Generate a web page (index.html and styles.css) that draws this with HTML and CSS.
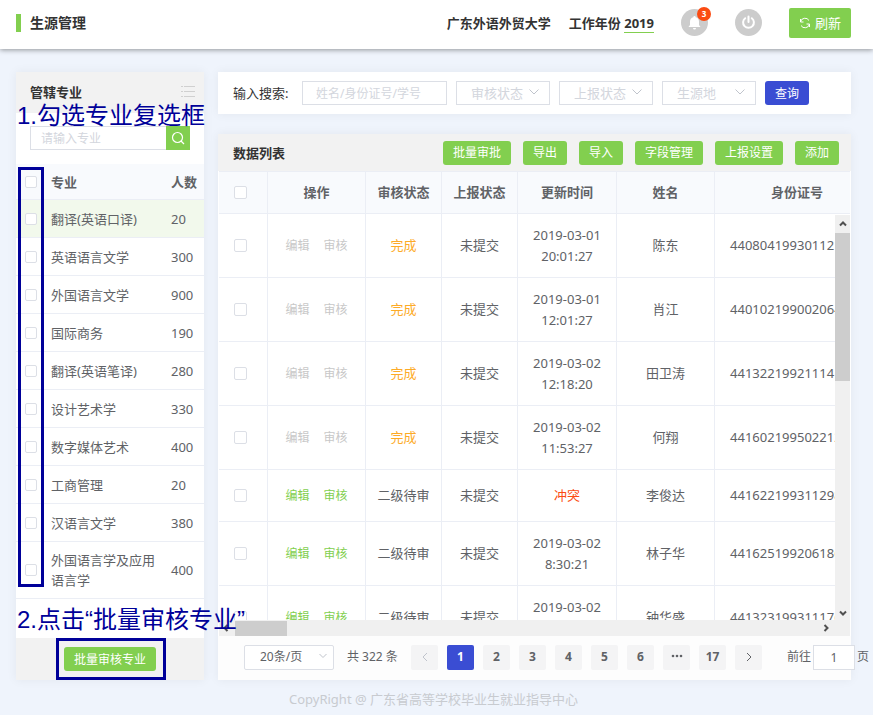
FILE: index.html
```html
<!DOCTYPE html>
<html lang="zh-CN">
<head>
	<meta charset="UTF-8">
	<title>生源管理</title>
	<link rel="stylesheet" href="styles.css">
</head>
<body>
	<header class="header">
		<h1 class="title">生源管理</h1>
		<div class="tools">
			<span class="school">广东外语外贸大学</span>
			<span class="year">工作年份 <a href="#">2019</a></span>
			<button class="round bell" aria-label="消息">
				<svg width="27" height="27" viewBox="0 0 27 27"><path d="M13.5 7a1.2 1.2 0 0 1 1.2 1.2c2 .5 3.300 2.200 3.300 4.300v3.500l1.500 2H7.500l1.500-2v-3.500c0-2.100 1.300-3.800 3.300-4.300A1.200 1.200 0 0 1 13.500 7zM12 19h3a1.500 1.500 0 0 1-3 0z" fill="#fff"/></svg>
				<span class="badge">3</span>
			</button>
			<button class="round" aria-label="退出">
				<svg width="27" height="27" viewBox="0 0 27 27" fill="none" stroke="#fff" stroke-width="2" stroke-linecap="round"><path d="M10.200 9.200a5.400 5.400 0 1 0 6.600 0M13.500 7.500v5.500"/></svg>
			</button>
			<button class="refresh">
				<svg width="12" height="12" viewBox="0 0 12 12" fill="none" stroke="#fff"><path d="M1.500 5a4.600 4.600 0 0 1 8.500-1.500M10.500 7A4.600 4.600 0 0 1 2 8.500M1.500 2v3h3M10.500 10V7h-3"/></svg>刷新
			</button>
		</div>
	</header>

	<div class="content">
		<!-- 左侧专业 -->
		<aside class="card side">
			<div class="side-head">
				<h2>管辖专业</h2>
				<svg width="14" height="12" viewBox="0 0 14 12" stroke="#d0d0d0" stroke-width="1"><path d="M0 .5h2M3 .5H14M0 5.500h2M3 5.500H14M0 10.500h2M3 10.500H14"/></svg>
			</div>
			<form class="side-search">
				<input type="text" placeholder="请输入专业" aria-label="请输入专业">
				<button type="button" aria-label="搜索">
					<svg width="14" height="14" viewBox="0 0 14 14" fill="none" stroke="#fff" stroke-width="1.200"><circle cx="6.500" cy="6.500" r="5"/><path d="M10 10l3 3"/></svg>
				</button>
			</form>
			<table class="major">
				<colgroup><col class="m-check"><col><col class="m-num"></colgroup>
				<thead>
					<tr><th><input type="checkbox" aria-label="全选"></th><th>专业</th><th>人数</th></tr>
				</thead>
				<tbody>
					<tr class="on"><td><input type="checkbox" aria-label="翻译(英语口译)"></td><td>翻译(英语口译)</td><td>20</td></tr>
					<tr><td><input type="checkbox" aria-label="英语语言文学"></td><td>英语语言文学</td><td>300</td></tr>
					<tr><td><input type="checkbox" aria-label="外国语言文学"></td><td>外国语言文学</td><td>900</td></tr>
					<tr><td><input type="checkbox" aria-label="国际商务"></td><td>国际商务</td><td>190</td></tr>
					<tr><td><input type="checkbox" aria-label="翻译(英语笔译)"></td><td>翻译(英语笔译)</td><td>280</td></tr>
					<tr><td><input type="checkbox" aria-label="设计艺术学"></td><td>设计艺术学</td><td>330</td></tr>
					<tr><td><input type="checkbox" aria-label="数字媒体艺术"></td><td>数字媒体艺术</td><td>400</td></tr>
					<tr><td><input type="checkbox" aria-label="工商管理"></td><td>工商管理</td><td>20</td></tr>
					<tr><td><input type="checkbox" aria-label="汉语言文学"></td><td>汉语言文学</td><td>380</td></tr>
					<tr class="two"><td><input type="checkbox" aria-label="外国语言学及应用语言学"></td><td>外国语言学及应用语言学</td><td>400</td></tr>
				</tbody>
			</table>
			<div class="side-foot">
				<button class="btn">批量审核专业</button>
				<span class="mark mark-btn"></span>
			</div>
			<span class="mark mark-check"></span>
			<p class="tip tip-one">1.勾选专业复选框</p>
			<p class="tip tip-two">2.点击“批量审核专业”</p>
		</aside>

		<main class="main">
			<form class="card search">
				<label for="key">输入搜索:</label>
				<input type="text" id="key" placeholder="姓名/身份证号/学号">
				<div class="select">
					<select aria-label="审核状态"><option>审核状态</option></select>
					<svg width="10" height="6" viewBox="0 0 10 6"><path d="M.5.5L5 5 9.500.5"/></svg>
				</div>
				<div class="select">
					<select aria-label="上报状态"><option>上报状态</option></select>
					<svg width="10" height="6" viewBox="0 0 10 6"><path d="M.5.5L5 5 9.500.5"/></svg>
				</div>
				<div class="select">
					<select aria-label="生源地"><option>生源地</option></select>
					<svg width="10" height="6" viewBox="0 0 10 6"><path d="M.5.5L5 5 9.500.5"/></svg>
				</div>
				<button type="button" class="btn blue">查询</button>
			</form>

			<section class="card list">
				<div class="list-head">
					<h2>数据列表</h2>
					<button class="btn">批量审批</button>
					<button class="btn">导出</button>
					<button class="btn">导入</button>
					<button class="btn">字段管理</button>
					<button class="btn">上报设置</button>
					<button class="btn">添加</button>
				</div>
				<div class="list-body">
					<div class="rows">
						<table class="data">
							<colgroup><col class="c-check"><col class="c-wide"><col class="c-state"><col class="c-state"><col class="c-time"><col class="c-wide"><col class="c-id"></colgroup>
							<thead>
								<tr><th><input type="checkbox" aria-label="全选"></th><th>操作</th><th>审核状态</th><th>上报状态</th><th>更新时间</th><th>姓名</th><th>身份证号</th></tr>
							</thead>
							<tbody>
								<tr class="done"><td><input type="checkbox" aria-label="陈东"></td><td><a href="#">编辑</a><a href="#">审核</a></td><td>完成</td><td>未提交</td><td>2019-03-01<br>20:01:27</td><td>陈东</td><td>440804199301121532</td></tr>
								<tr class="done"><td><input type="checkbox" aria-label="肖江"></td><td><a href="#">编辑</a><a href="#">审核</a></td><td>完成</td><td>未提交</td><td>2019-03-01<br>12:01:27</td><td>肖江</td><td>440102199002064415</td></tr>
								<tr class="done"><td><input type="checkbox" aria-label="田卫涛"></td><td><a href="#">编辑</a><a href="#">审核</a></td><td>完成</td><td>未提交</td><td>2019-03-02<br>12:18:20</td><td>田卫涛</td><td>441322199211141013</td></tr>
								<tr class="done"><td><input type="checkbox" aria-label="何翔"></td><td><a href="#">编辑</a><a href="#">审核</a></td><td>完成</td><td>未提交</td><td>2019-03-02<br>11:53:27</td><td>何翔</td><td>441602199502212016</td></tr>
								<tr class="short"><td><input type="checkbox" aria-label="李俊达"></td><td><a href="#">编辑</a><a href="#">审核</a></td><td>二级待审</td><td>未提交</td><td class="clash">冲突</td><td>李俊达</td><td>441622199311298017</td></tr>
								<tr><td><input type="checkbox" aria-label="林子华"></td><td><a href="#">编辑</a><a href="#">审核</a></td><td>二级待审</td><td>未提交</td><td>2019-03-02<br>8:30:21</td><td>林子华</td><td>441625199206186014</td></tr>
								<tr><td><input type="checkbox" aria-label="钟华盛"></td><td><a href="#">编辑</a><a href="#">审核</a></td><td>二级待审</td><td>未提交</td><td>2019-03-02<br>8:30:21</td><td>钟华盛</td><td>441323199311176011</td></tr>
							</tbody>
						</table>
					</div>
					<div class="bar-y">
						<svg width="8" height="6" viewBox="0 0 8 6"><path d="M1 4.500L4 1.500l3 3"/></svg>
						<span class="thumb"></span>
						<svg width="8" height="6" viewBox="0 0 8 6"><path d="M1 1.500l3 3 3-3"/></svg>
					</div>
					<div class="bar-x">
						<svg width="6" height="8" viewBox="0 0 6 8"><path d="M4.500 1l-3 3 3 3"/></svg>
						<span class="thumb"></span>
						<svg width="6" height="8" viewBox="0 0 6 8"><path d="M1.500 1l3 3-3 3"/></svg>
					</div>
				</div>
				<div class="pages">
					<div class="select size">
						<select aria-label="每页条数"><option>20条/页</option></select>
						<svg width="10" height="6" viewBox="0 0 10 6"><path d="M1.500 1L5 4.500 8.500 1"/></svg>
					</div>
					<span class="total">共 322 条</span>
					<button aria-label="上一页" disabled><svg width="6" height="10" viewBox="0 0 6 10"><path d="M5 1L1 5l4 4"/></svg></button>
					<button class="now">1</button>
					<button>2</button>
					<button>3</button>
					<button>4</button>
					<button>5</button>
					<button>6</button>
					<button aria-label="更多"><svg class="dots" width="12" height="10" viewBox="0 0 12 10"><circle cx="2" cy="4" r="1.300"/><circle cx="6" cy="4" r="1.300"/><circle cx="10" cy="4" r="1.300"/></svg></button>
					<button>17</button>
					<button aria-label="下一页"><svg width="6" height="10" viewBox="0 0 6 10"><path d="M1 1l4 4-4 4"/></svg></button>
					<label class="jump">前往<input type="text" value="1">页</label>
				</div>
			</section>
		</main>
	</div>
	<footer class="footer">CopyRight @ 广东省高等学校毕业生就业指导中心</footer>
</body>
</html>
```

FILE: styles.css
```css
*{
	box-sizing: border-box;
}
body{
	margin: 0;
	min-height: 100vh;
	display: flex;
	flex-direction: column;
	background: #eff4fc;
	color: #606266;
	font: 13px/20px "Noto Sans", "Noto Sans CJK SC", sans-serif;
}
h1, h2, p{
	margin: 0;
}
h2{
	font-size: 13px;
	color: #333;
}
button, input, select{
	font: inherit;
	color: inherit;
	margin: 0;
}
button{
	border: 0;
	padding: 0;
	cursor: pointer;
}
a{
	color: inherit;
	text-decoration: none;
}
svg{
	display: block;
	flex: none;
}
table{
	border-collapse: separate;
	border-spacing: 0;
	table-layout: fixed;
}
th, td{
	padding: 0;
	border-bottom: 1px solid #ebeef5;
}
th{
	background: #f8fafd;
}
input[type=text]{
	border: 1px solid #dcdfe6;
	background: #fff;
	height: 24px;
	outline: 0;
}
input::placeholder{
	color: #d3d6dd;
	opacity: 1;
}
input[type=checkbox]{
	appearance: none;
	display: block;
	width: 13px;
	height: 13px;
	margin: 0 auto;
	border: 1px solid #dcdfe6;
	border-radius: 2px;
	background: #fff;
}

/* 顶部 */
.header{
	height: 49px;
	padding: 0 22px 4px 16px;
	display: flex;
	align-items: center;
	justify-content: space-between;
	background: #fff;
	box-shadow: 0 1px 5px rgba(0,0,0,.4);
	color: #333;
}
.title{
	border-left: 5px solid #82cf4f;
	padding-left: 9px;
	font-size: 14px;
	line-height: 18px;
}
.tools{
	display: flex;
	align-items: center;
	font-weight: bold;
}
.year{
	margin-left: 18px;
}
.year a{
	display: inline-block;
	line-height: 17px;
	border-bottom: 1px solid #82cf4f;
}
.round{
	position: relative;
	width: 27px;
	height: 27px;
	margin-left: 27px;
	border-radius: 50%;
	background: #ccc;
}
.badge{
	position: absolute;
	top: -2px;
	right: -3px;
	width: 14px;
	height: 14px;
	border-radius: 50%;
	background: #fb4b12;
	color: #fff;
	font-size: 8px;
	line-height: 14px;
}
.refresh{
	display: flex;
	align-items: center;
	justify-content: center;
	gap: 4px;
	width: 62px;
	height: 30px;
	margin-left: 27px;
	border-radius: 2px;
	background: #82cf4f;
	color: #fff;
	font-weight: normal;
}

.content{
	flex: 1;
	display: grid;
	grid-template-columns: 188px minmax(0, 1fr);
	gap: 14px;
	padding: 23px 22px 0 16px;
}
.card{
	background: #fff;
	box-shadow: 0 0 10px rgba(0,0,0,.06);
}
.btn{
	height: 24px;
	padding: 1px 10px 0;
	border-radius: 3px;
	background: #82cf4f;
	color: #fff;
	font-size: 12px;
	white-space: nowrap;
}
.blue{
	background: #3a4dd3;
}

/* 左侧 */
.side{
	position: relative;
	display: flex;
	flex-direction: column;
}
.side-head{
	display: flex;
	align-items: center;
	justify-content: space-between;
	height: 41px;
	padding: 0 9px 2px 14px;
	background: #f2f2f2;
}
.side-search{
	display: flex;
	padding: 13px 14px 14px;
}
.side-search input{
	flex: 1;
	min-width: 0;
	padding: 0 10px;
	border-right: 0;
	font-size: 12px;
}
.side-search button{
	width: 24px;
	height: 24px;
	padding: 0 5px;
	background: #82cf4f;
}
.major{
	width: 100%;
	text-align: left;
}
.major tr{
	height: 38px;
}
.major thead tr{
	height: 36px;
}
.major .two{
	height: 57px;
}
.m-check{
	width: 35px;
}
.m-num{
	width: 49px;
}
.major td:last-child, .major th:last-child{
	padding-left: 16px;
	white-space: nowrap;
}
.major input{
	margin-left: 9px;
	width: 12px;
	height: 12px;
}
.on{
	background: #f2f9ec;
}
.side-foot{
	position: relative;
	margin-top: auto;
	height: 42px;
	display: flex;
	align-items: center;
	justify-content: center;
	background: #f2f2f2;
}

/* 操作提示 */
.mark{
	position: absolute;
	border: 3px solid #000099;
	pointer-events: none;
}
.mark-check{
	left: 2px;
	top: 95px;
	width: 26px;
	height: 420px;
}
.mark-btn{
	inset: 0 38px 0 40px;
}
.tip{
	position: absolute;
	left: 1px;
	z-index: 2;
	color: #000099;
	font: 24px/30px "Liberation Sans", "Noto Sans CJK SC", sans-serif;
	white-space: nowrap;
}
.tip-one{
	top: 29px;
}
.tip-two{
	top: 533px;
}

/* 右侧 */
.main{
	display: flex;
	flex-direction: column;
	gap: 20px;
}
.search{
	display: flex;
	align-items: center;
	gap: 9px;
	height: 42px;
	padding: 0 15px;
}
.search label{
	width: 60px;
	color: #333;
	white-space: nowrap;
}
.search input{
	width: 145px;
	padding: 0 13px;
	font-size: 12px;
}
.select{
	position: relative;
	width: 94px;
}
.select select{
	appearance: none;
	display: block;
	width: 100%;
	height: 24px;
	padding: 0 14px;
	border: 1px solid #dcdfe6;
	border-radius: 0;
	background: #fff;
	color: #d3d6dd;
}
.select svg{
	position: absolute;
	right: 11px;
	top: 8px;
	fill: none;
	stroke: #c0c4cc;
	pointer-events: none;
}
.list{
	flex: 1;
	display: flex;
	flex-direction: column;
}
.list-head{
	display: flex;
	align-items: center;
	gap: 12px;
	height: 37px;
	padding: 0 12px 0 15px;
	background: #f2f2f2;
}
.list-head h2{
	margin-right: auto;
}
.list-body{
	position: relative;
	flex: 1 0 465px;
	margin: 0 1px;
	border-top: 1px solid #ebeef5;
	overflow: hidden;
}
.rows{
	position: absolute;
	inset: 0 0 16px 0;
	overflow: hidden;
}
.data{
	width: 661px;
	text-align: center;
	line-height: 21px;
}
.data tr{
	height: 64px;
}
.data thead tr{
	height: 42px;
}
.data .short{
	height: 52px;
}
.data th, .data td{
	border-right: 1px solid #ebeef5;
}
.c-check{
	width: 49px;
}
.c-wide{
	width: 98px;
}
.c-state{
	width: 76px;
}
.c-time{
	width: 99px;
}
.c-id{
	width: 165px;
}
.data td:first-child input, .data th:first-child input{
	margin-left: 15px;
}
.data a{
	color: #82cf4f;
	font-size: 12px;
}
.data a + a{
	margin-left: 14px;
}
.done a{
	color: #c8c8c8;
}
.done td:nth-child(3){
	color: #fdab27;
}
.data .clash{
	color: #fb4b12;
}
.bar-y, .bar-x{
	position: absolute;
	display: flex;
	align-items: center;
	background: #f0f0f0;
}
.bar-y{
	flex-direction: column;
	top: 43px;
	right: 0;
	bottom: 15px;
	width: 15px;
	padding: 6px 0 5px;
	gap: 6px;
}
.bar-x{
	left: 0;
	right: 0;
	bottom: 0;
	height: 16px;
	padding: 0 21px 0 4px;
	gap: 6px;
}
.bar-y svg, .bar-x svg{
	fill: none;
	stroke: #505050;
	stroke-width: 2;
}
.thumb{
	background: #cdcdcd;
}
.bar-y .thumb{
	width: 15px;
	height: 148px;
	margin-bottom: auto;
}
.bar-x .thumb{
	width: 52px;
	height: 15px;
	margin-right: auto;
}
.pages{
	display: flex;
	align-items: center;
	gap: 9px;
	height: 44px;
	padding: 0 0 2px 26px;
	background: #fdfdfd;
	white-space: nowrap;
}
.pages > *{
	flex: none;
}
.size{
	width: 90px;
}
.size select{
	height: 25px;
	padding: 0 15px;
	border-radius: 2px;
	color: #606266;
	font-size: 12px;
}
.size svg{
	right: 6px;
}
.total{
	width: 59px;
	padding-left: 4px;
	font-size: 12px;
}
.pages button{
	display: flex;
	align-items: center;
	justify-content: center;
	width: 27px;
	height: 25px;
	border-radius: 2px;
	background: #f4f4f5;
	font-size: 12px;
	font-weight: bold;
}
.pages button svg{
	fill: none;
	stroke: #606266;
	stroke-width: 1;
}
.pages button:disabled svg{
	stroke: #c0c4cc;
}
.pages .dots{
	fill: #606266;
	stroke: none;
}
.pages .now{
	background: #3a4dd3;
	color: #fff;
}
.jump{
	display: flex;
	align-items: center;
	gap: 2px;
	margin-left: 16px;
	font-size: 12px;
}
.jump input{
	width: 42px;
	height: 25px;
	text-align: center;
}
.footer{
	height: 35px;
	padding: 9px 22px 0 16px;
	text-align: center;
	color: #c8cbd0;
}
```
